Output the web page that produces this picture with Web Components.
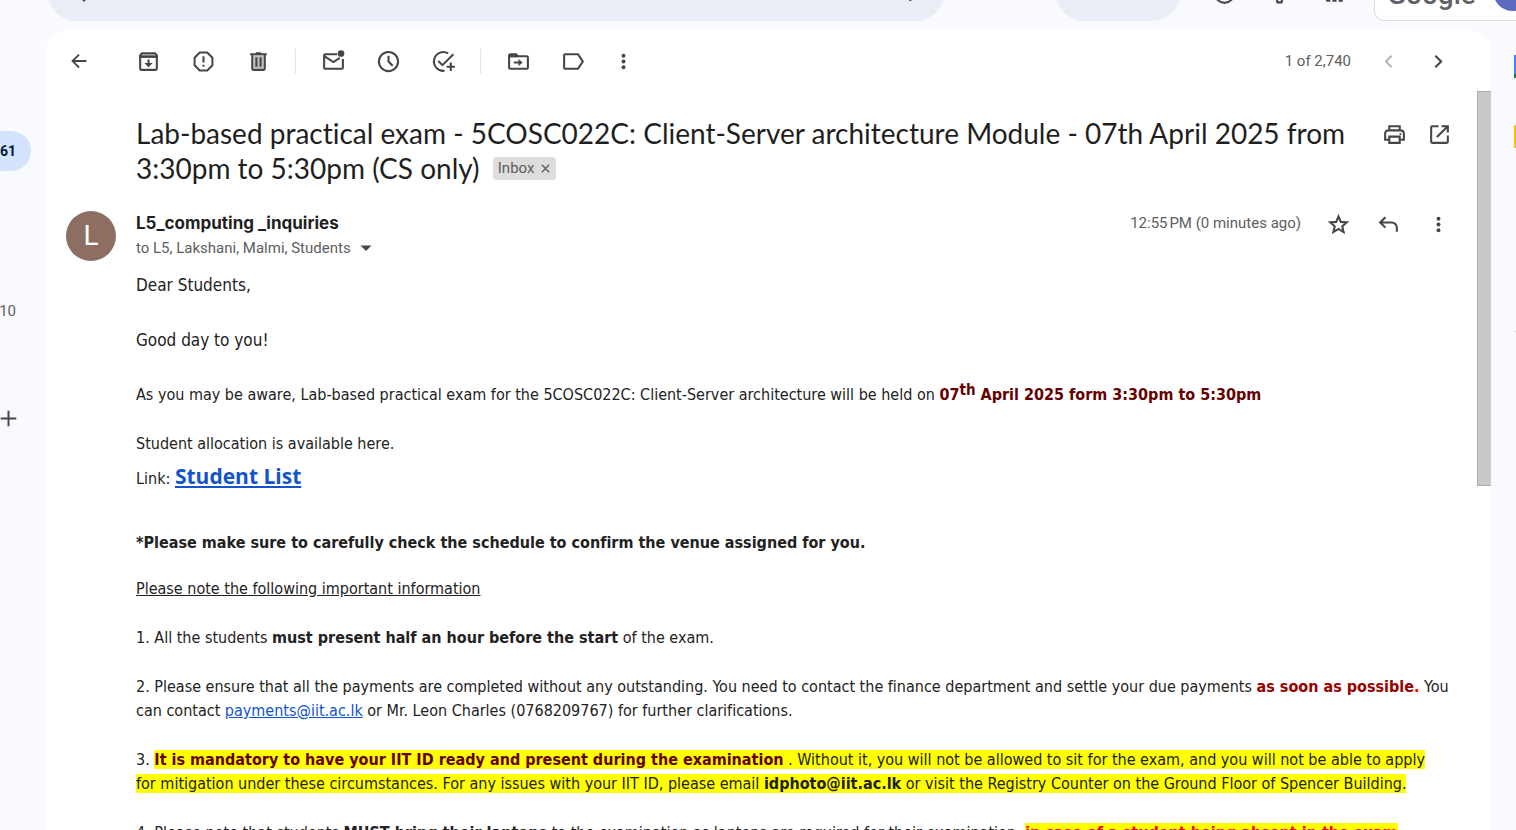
<!DOCTYPE html>
<html lang="en">
<head>
<meta charset="utf-8">
<title>Lab-based practical exam - Mail</title>
<style>
html, body { margin: 0; height: 100%; }
body { font-family: Roboto, "Liberation Sans", sans-serif; background: #f8fafd; color: #1f1f1f; overflow: hidden; }
</style>
</head>
<body>
<mail-app></mail-app>

<template id="t-app">
<style>
:host { display: flex; flex-direction: column; height: 100vh; overflow: hidden; }
.main { flex: 1; min-height: 0; display: flex; }
mail-card { flex: 1; min-width: 0; }
</style>
<mail-header></mail-header>
<div class="main">
  <mail-nav></mail-nav>
  <mail-card></mail-card>
  <side-apps></side-apps>
</div>
</template>

<template id="t-header">
<style>
:host { display: flex; align-items: flex-end; height: 31px; box-sizing: border-box; padding: 0 0 10px 47px; overflow: hidden; }
.search { flex: 0 1 898px; height: 60px; box-sizing: border-box; border-radius: 30px; background: #e9eef6; display: flex; justify-content: space-between; align-items: center; padding: 0 18px 0 13px; color: #444746; }
.chip { flex: none; width: 126px; height: 60px; border-radius: 30px; background: #e9eef6; margin-left: auto; }
.icons { display: flex; gap: 15px; margin: 0 20px 0 23px; padding-bottom: 8px; height: 40px; align-items: center; }
button { border: 0; background: none; padding: 0; width: 40px; height: 40px; display: grid; place-items: center; color: #444746; }
.account { flex: none; width: 142px; height: 60px; box-sizing: border-box; border: 1px solid #dadce0; border-right: 0; border-radius: 10px 0 0 10px; background: #fff; display: flex; align-items: center; padding-left: 12px; overflow: hidden; }
.brand { font: 500 28px/36px Roboto, sans-serif; color: #5f6368; width: 106px; flex: none; padding-top: 8px; }
.face { flex: none; width: 40px; height: 40px; border-radius: 50%; background: #5c6bc0; }
</style>
<div class="search"><mail-icon name="search"></mail-icon><mail-icon name="tune"></mail-icon></div>
<div class="chip"></div>
<div class="icons">
  <button aria-label="Support"><mail-icon name="help"></mail-icon></button>
  <button aria-label="Settings"><mail-icon name="gear"></mail-icon></button>
  <button aria-label="Apps"><mail-icon name="apps"></mail-icon></button>
</div>
<div class="account"><span class="brand">Google</span><span class="face"></span></div>
</template>

<template id="t-nav">
<style>
:host { display: flex; flex-direction: column; align-items: flex-start; flex: none; width: 46px; padding-top: 100px; box-sizing: border-box; font-size: 15px; color: #5e5e5e; }
a, button { display: flex; justify-content: flex-end; align-items: center; width: 31px; height: 40px; box-sizing: border-box; padding: 0 15px 0 0; color: inherit; text-decoration: none; }
.on { background: #d3e3fd; border-radius: 0 20px 20px 0; font-weight: 700; color: #001d35; font-size: 14px; }
.drafts { margin-top: 120px; }
button { margin-top: 67px; border: 0; background: none; padding: 0 14px 0 0; color: #444746; }
mail-icon { flex: none; }
</style>
<a class="on" href="#inbox">261</a>
<a class="drafts" href="#drafts">10</a>
<button aria-label="Create label"><mail-icon name="plus"></mail-icon></button>
</template>

<template id="t-side">
<style>
:host { display: flex; flex-direction: column; align-items: flex-end; flex: none; width: 25px; overflow: hidden; padding-top: 24px; box-sizing: border-box; }
.cal { width: 2px; height: 23px; background: linear-gradient(#4285f4 19px, #188038 19px); }
.keep { width: 2px; height: 23px; background: #fbbc04; margin-top: 47px; }
.rule { width: 2px; height: 1px; background: #dadce0; margin-top: 183px; }
</style>
<div class="cal"></div><div class="keep"></div><div class="rule"></div>
</template>

<template id="t-card">
<style>
:host { display: flex; flex-direction: column; background: #fff; border-radius: 20px 20px 0 0; overflow: hidden; }
.view { flex: 1; min-height: 0; display: flex; }
.scroll { flex: 1; min-width: 0; overflow: hidden; }
.thumb { flex: none; width: 14px; height: 395px; box-sizing: border-box; background: #c8c8c8; border: solid #acacac; border-width: 1px 0 1px 1px; }
</style>
<mail-toolbar></mail-toolbar>
<div class="view">
  <div class="scroll">
    <mail-subject></mail-subject>
    <mail-sender></mail-sender>
    <mail-body></mail-body>
  </div>
  <div class="thumb"></div>
</div>
</template>

<template id="t-toolbar">
<style>
:host { display: flex; align-items: center; height: 60px; box-sizing: border-box; padding: 0 33px 0 13px; flex: none; color: #444746; }
button { border: 0; background: none; padding: 0; width: 40px; height: 40px; display: grid; place-items: center; color: inherit; flex: none; }
button:disabled { color: #b4b6b6; }
.group { display: flex; gap: 15px; }
.group + .group { border-left: 1px solid #e3e5e8; padding: 0 17px; height: 25px; align-items: center; }
.first { margin: 0 17px 0 29px; }
.tight { margin-left: -5px; }
.count { margin: 0 17px 0 auto; font-size: 15px; color: #5e5e5e; }
.pages { display: flex; gap: 10px; }
</style>
<button aria-label="Back to Inbox"><mail-icon name="back"></mail-icon></button>
<div class="group first">
  <button aria-label="Archive"><mail-icon name="archive"></mail-icon></button>
  <button aria-label="Report spam"><mail-icon name="spam"></mail-icon></button>
  <button aria-label="Delete"><mail-icon name="trash"></mail-icon></button>
</div>
<div class="group">
  <button aria-label="Mark as unread"><mail-icon name="unread"></mail-icon></button>
  <button aria-label="Snooze"><mail-icon name="clock"></mail-icon></button>
  <button aria-label="Add to Tasks"><mail-icon name="task"></mail-icon></button>
</div>
<div class="group">
  <button aria-label="Move to"><mail-icon name="move"></mail-icon></button>
  <button aria-label="Labels"><mail-icon name="label"></mail-icon></button>
  <button class="tight" aria-label="More"><mail-icon name="more"></mail-icon></button>
</div>
<span class="count">1 of 2,740</span>
<div class="pages">
  <button aria-label="Newer" disabled><mail-icon name="prev"></mail-icon></button>
  <button aria-label="Older"><mail-icon name="next"></mail-icon></button>
</div>
</template>

<template id="t-subject">
<style>
:host { display: flex; align-items: flex-start; padding: 25px 18px 0 90px; }
h1 { flex: 1; margin: 0; font: 400 28px/35px Lato, sans-serif; font-variant-ligatures: none; color: #1f1f1f; }
.tag { display: inline-flex; align-items: center; gap: 6px; height: 23px; padding: 0 5px; margin-left: 6px; border-radius: 4px; background: #ddd; color: #5e5e5e; font: 400 15px/23px Roboto, sans-serif; vertical-align: 6px; }
.tools { display: flex; gap: 5px; margin-left: 8px; }
button { border: 0; background: none; padding: 0; width: 40px; height: 36px; display: grid; place-items: center; color: #444746; flex: none; }
.tag button { width: 11px; height: 23px; color: #5e5e5e; }
</style>
<h1>Lab-based practical exam - 5COSC022C: Client-Server architecture Module - 07th April 2025 from 3:30pm to 5:30pm (CS only) <span class="tag">Inbox<button aria-label="Remove label Inbox"><mail-icon name="x"></mail-icon></button></span></h1>
<div class="tools">
  <button aria-label="Print all"><mail-icon name="print"></mail-icon></button>
  <button aria-label="In new window"><mail-icon name="open"></mail-icon></button>
</div>
</template>

<template id="t-sender">
<style>
:host { display: flex; align-items: flex-start; padding: 25px 19px 0 20px; color: #5e5e5e; font-size: 15px; }
.avatar { flex: none; width: 50px; height: 50px; border-radius: 50%; background: #8d6e63; color: #fff; display: grid; place-items: center; font: 400 28px/50px Roboto, sans-serif; margin-right: 20px; }
.who { flex: 1; }
h2 { margin: 0; font: 700 17px/24px Inter, sans-serif; color: #1f1f1f; }
.to { display: flex; align-items: center; gap: 9px; line-height: 26px; }
.to button { width: 12px; height: 26px; }
time { line-height: 24px; margin-right: 17px; }
.acts { display: flex; gap: 10px; }
button { border: 0; background: none; padding: 0; width: 40px; height: 26px; display: grid; place-items: center; color: #444746; flex: none; }
</style>
<div class="avatar">L</div>
<div class="who">
  <h2>L5_computing _inquiries</h2>
  <div class="to"><span>to L5, Lakshani, Malmi, Students</span><button aria-label="Show details"><mail-icon name="caret"></mail-icon></button></div>
</div>
<time>12:55&#8239;PM (0 minutes ago)</time>
<div class="acts">
  <button aria-label="Star"><mail-icon name="star"></mail-icon></button>
  <button aria-label="Reply"><mail-icon name="reply"></mail-icon></button>
  <button aria-label="More"><mail-icon name="more"></mail-icon></button>
</div>
</template>

<template id="t-body">
<style>
:host { display: block; padding: 12px 12px 0 90px; font: 400 16px/24px "DejaVu Sans Condensed", "DejaVu Sans", sans-serif; font-variant-ligatures: none; color: #222; }
p { margin: 0 0 25px; }
.greet { font-size: 17px; margin-bottom: 31px; }
.near { margin-bottom: 4px; }
.link { line-height: 32px; margin-bottom: 36px; }
.link a { font: 700 21px/32px "Open Sans", sans-serif; }
.check { margin-bottom: 22px; }
a { color: #15c; }
.wine { color: #600; }
.dark { color: #900; }
.red { color: #f00; }
mark { background: #ff0; color: inherit; }
sup { font-size: 15px; line-height: 0; vertical-align: 5px; }
</style>
<p class="greet">Dear Students,</p>
<p class="greet">Good day to you!</p>
<p>As you may be aware, Lab-based practical exam for the 5COSC022C: Client-Server architecture will be held on <b class="wine">07<sup>th</sup> April 2025 form 3:30pm to 5:30pm</b></p>
<p class="near">Student allocation is available here.</p>
<p class="link">Link: <a href="#list">Student List</a></p>
<p class="check"><b>*Please make sure to carefully check the schedule to confirm the venue assigned for you.</b></p>
<p><u>Please note the following important information</u></p>
<p>1. All the students <b>must present half an hour before the start</b> of the exam.</p>
<p>2. Please ensure that all the payments are completed without any outstanding. You need to contact the finance department and settle your due payments <b class="dark">as soon as possible<span class="red">.</span></b> You can contact <a href="mailto:payments@iit.ac.lk">payments@iit.ac.lk</a> or Mr. Leon Charles (0768209767) for further clarifications.</p>
<p>3. <mark><b class="wine">It is mandatory to have your IIT ID ready and present during the examination</b> . Without it, you will not be allowed to sit for the exam, and you will not be able to apply for&nbsp;mitigation under these circumstances. For any issues with your IIT ID, please email <b>idphoto@iit.ac.lk</b> or visit the Registry Counter on the Ground Floor of Spencer Building.</mark></p>
<p>4. Please note that students <b>MUST bring their laptops</b> to the examination as laptops are required for their examination. <mark><b class="red">in case of a student being absent in the exam</b></mark></p>
</template>

<script>
const S = 'fill="none" stroke="currentColor" stroke-width="2"';
const ICONS = {
  back: [25, `<path ${S} d="M20 12H5.5M12 5l-7 7 7 7"/>`],
  archive: [25, `<path ${S} d="M4 7.500V19a1 1 0 0 0 1 1h14a1 1 0 0 0 1-1V7.500z"/><path ${S} stroke-linejoin="round" d="M4 7.500V6.200L5.800 4h12.400L20 6.200v1.300z"/><path fill="#444746" fill-opacity=".5" d="M5 5h14v2H5z"/><path fill="currentColor" d="M11 10h2v3.500h3l-4 4-4-4h3z"/>`],
  spam: [25, `<path ${S} d="M8.200 3h7.600L21 8.200v7.600L15.800 21H8.200L3 15.800V8.200z" transform="translate(.6 .6) scale(.95)"/><path fill="currentColor" d="M11 7h2v6h-2zM11 15h2v2h-2z"/>`],
  trash: [25, `<path ${S} d="M6 5.500V19a1 1 0 0 0 1 1h10a1 1 0 0 0 1-1V5.500"/><path fill="currentColor" d="M4 4h5l1-1h4l1 1h5v2H4zM9 8h2v9H9zM13 8h2v9h-2z"/><path fill="currentColor" fill-opacity=".35" d="M7 6h10v13H7z"/>`],
  unread: [25, `<path ${S} d="M15.500 5H4a1 1 0 0 0-1 1v12a1 1 0 0 0 1 1h16a1 1 0 0 0 1-1V9.500M3.500 7 12 12.500l6-4"/><circle cx="19.200" cy="4.300" r="3.200" fill="currentColor"/>`],
  clock: [25, `<circle ${S} cx="12" cy="12" r="9.200"/><path ${S} d="M12 6.500V12l4 4"/>`],
  task: [25, `<path ${S} d="M16.500 4.300A9 9 0 1 0 13 20.900M7 11.500l4 4L21.500 5M19 13v8M15 17h8"/>`],
  move: [25, `<path ${S} d="M3 6.500V18a1 1 0 0 0 1 1h16a1 1 0 0 0 1-1V8a1 1 0 0 0-1-1H3z"/><path fill="currentColor" d="M2 8V6c0-1.100.9-2 2-2h6l2 2v2zM7.500 12H12V9.500l4 3.500-4 3.500V14H7.500z"/>`],
  label: [25, `<path ${S} stroke-linejoin="round" d="M4 5h12.200L21 12l-4.800 7H4a1 1 0 0 1-1-1V6a1 1 0 0 1 1-1z"/>`],
  more: [25, `<g fill="currentColor"><circle cx="12" cy="6.500" r="1.900"/><circle cx="12" cy="12" r="1.900"/><circle cx="12" cy="17.500" r="1.900"/></g>`],
  prev: [25, `<path ${S} d="M15 6.500 9.500 12l5.500 5.500"/>`],
  next: [25, `<path ${S} d="M9 6.500 14.500 12 9 17.500"/>`],
  print: [25, `<path ${S} d="M7 8V4h10v4M7 17H3v-6a3 3 0 0 1 3-3h12a3 3 0 0 1 3 3v6h-4M7 14h10v6H7z"/><circle cx="17.700" cy="11.500" r="1" fill="currentColor"/>`],
  open: [25, `<path ${S} d="M11 4H5a1 1 0 0 0-1 1v14a1 1 0 0 0 1 1h14a1 1 0 0 0 1-1v-6M14 4h6v6M20 4 9.500 14.500"/>`],
  star: [25, `<path ${S} d="M12 4.200l2.200 5.300 5.700.5-4.300 3.700 1.300 5.600-4.900-3-4.900 3 1.300-5.600L4.100 10l5.700-.5z"/>`],
  reply: [25, `<path ${S} d="M9 5l-5 5 5 5M4.500 10H15a5 5 0 0 1 5 5v4"/>`],
  caret: [12, `<path fill="currentColor" d="M1 7h22L12 18z"/>`],
  x: [11, `<path ${S} d="M4 4l16 16M20 4 4 20" style="stroke-width:3"/>`],
  plus: [17, `<path ${S} d="M12 1v22M1 12h22" style="stroke-width:2.800"/>`],
  search: [30, `<circle ${S} cx="10" cy="10" r="6"/><path ${S} d="M14.500 14.500 20 20"/>`],
  tune: [25, `<path ${S} d="M3 6h18M3 12h18M3 18h18M8 15v6M15 3v6"/>`],
  help: [25, `<circle ${S} cx="12" cy="12" r="9"/>`],
  gear: [25, `<circle ${S} cx="12" cy="12" r="3"/><path ${S} d="M10 20.500h4l.6-3 2.600-1.500 3 1 1.800-3.400-2.300-1.800v-2.600l2.300-2-1.900-3.200-3 1-2.500-1.500-.6-3h-4l-.6 3L6.900 5l-3-1L2 7.200l2.300 2v2.600L2 13.600 3.900 17l3-1 2.500 1.500z"/>`],
  apps: [25, `<path fill="currentColor" d="M4 4h4v4H4zM10 4h4v4h-4zM16 4h4v4h-4zM4 10h4v4H4zM10 10h4v4h-4zM16 10h4v4h-4zM4 16h4v4H4zM10 16h4v4h-4zM16 16h4v4h-4z"/>`]
};

class MailIcon extends HTMLElement {
  connectedCallback() {
    const name = this.getAttribute('name');
    const [size, shape] = ICONS[name];
    const box = name === 'back' ? '-1 -1 27 27' : '0 0 24 24';
    const root = this.shadowRoot || this.attachShadow({ mode: 'open' });
    root.innerHTML = `<style>:host{display:block;line-height:0}svg{display:block}</style><svg width="${size}" height="${size}" viewBox="${box}" aria-hidden="true">${shape}</svg>`;
  }
}
customElements.define('mail-icon', MailIcon);

const define = (tag, id) => customElements.define(tag, class extends HTMLElement {
  constructor() {
    super();
    this.attachShadow({ mode: 'open' }).append(document.getElementById(id).content.cloneNode(true));
  }
});
define('mail-header', 't-header');
define('mail-nav', 't-nav');
define('side-apps', 't-side');
define('mail-toolbar', 't-toolbar');
define('mail-subject', 't-subject');
define('mail-sender', 't-sender');
define('mail-body', 't-body');
define('mail-card', 't-card');
define('mail-app', 't-app');
</script>
</body>
</html>
